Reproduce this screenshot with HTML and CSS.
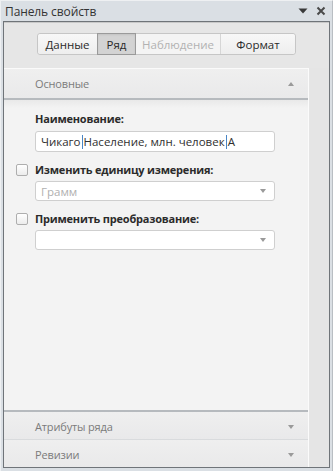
FILE: index.html
```html
<!DOCTYPE html>
<html lang="ru">
<head>
<meta charset="utf-8">
<title>Панель свойств</title>
<link rel="stylesheet" href="styles.css">
</head>
<body>
<div class="window">
  <div class="titlebar">
    <span class="title">Панель свойств</span>
    <span class="title-tools">
      <svg class="tool" width="10" height="8" viewBox="0 0 10 8"><path d="M0.5 1.5 H9.5 L5 6.5 Z" fill="#3a3a3a"/></svg>
      <svg class="tool" width="10" height="10" viewBox="0 0 10 10"><path d="M1.5 1.5 L8.5 8.5 M8.5 1.5 L1.5 8.5" stroke="#4a4a4a" stroke-width="2"/></svg>
    </span>
  </div>
  <div class="inner">
    <div class="tabs-area">
      <div class="tabs">
        <span class="tab">Данные</span>
        <span class="tab active">Ряд</span>
        <span class="tab disabled">Наблюдение</span>
        <span class="tab">Формат</span>
      </div>
    </div>
    <div class="body-row">
      <div class="panel">
        <div class="section-head open">
          <span>Основные</span>
          <span class="arrow up"></span>
        </div>
        <div class="section-body">
          <div class="field">
            <div class="label">Наименование:</div>
            <div class="input">Чикаго<span class="sep"></span>Население, млн. человек<span class="sep"></span>А</div>
          </div>
          <div class="field">
            <div class="label check-label"><span class="checkbox"></span>Изменить единицу измерения:</div>
            <div class="input select"><span class="placeholder">Грамм</span><span class="arrow down"></span></div>
          </div>
          <div class="field">
            <div class="label check-label"><span class="checkbox"></span>Применить преобразование:</div>
            <div class="input select"><span></span><span class="arrow down"></span></div>
          </div>
        </div>
        <div class="section-head closed first">
          <span>Атрибуты ряда</span>
          <span class="arrow down"></span>
        </div>
        <div class="section-head closed">
          <span>Ревизии</span>
          <span class="arrow down"></span>
        </div>
      </div>
      <div class="strip"></div>
    </div>
  </div>
</div>
</body>
</html>
```

FILE: styles.css
```css
* { box-sizing: border-box; }
html, body {
  margin: 0;
  padding: 0;
  width: 333px;
  height: 471px;
  overflow: hidden;
}
body {
  font-family: "Open Sans", "Noto Sans", sans-serif;
  font-size: 11px;
  color: #2e2e2e;
  background: #dadfe4;
}
.window {
  width: 333px;
  height: 471px;
  display: flex;
  flex-direction: column;
  border-left: 1px solid #eef0f2;
  border-top: 1px solid #eef0f2;
  border-right: 1px solid #b9bec3;
}
.titlebar {
  height: 20px;
  display: flex;
  align-items: center;
  justify-content: space-between;
  padding: 0 6px 0 4px;
}
.title {
  font-size: 12px;
  color: #333;
  letter-spacing: -0.1px;
}
.title-tools {
  display: flex;
  align-items: center;
  gap: 8px;
}
.tool { display: block; }
.inner {
  flex: 1;
  margin: 0 2px 3px 2px;
  border: 1px solid #6f7479;
  background: #e6e6e6;
  display: flex;
  flex-direction: column;
  min-height: 0;
}
.tabs-area {
  height: 46px;
  display: flex;
  justify-content: center;
  padding-top: 10px;
  border-top: 1px solid #c8c8c8;
}
.tabs {
  display: flex;
  height: 22px;
  border: 1px solid #c6c6c6;
  border-radius: 3px;
  background: #f4f4f4;
}
.tab {
  display: flex;
  align-items: center;
  justify-content: center;
  font-size: 11.5px;
  color: #2a2a2a;
  background: linear-gradient(#f8f8f8, #eeeeee);
  border-left: 1px solid #d6d6d6;
}
.tab:first-child { border-left: none; width: 59px; border-radius: 3px 0 0 3px; }
.tab:nth-child(2) { width: 39px; }
.tab:nth-child(3) { width: 84px; }
.tab:nth-child(4) { width: 75px; border-radius: 0 3px 3px 0; }
.tab.active {
  background: #d3d3d3;
  border: 1px solid #9a9a9a;
  margin: -1px 0;
  box-shadow: inset 0 1px 2px rgba(0,0,0,0.08);
}
.tab.disabled {
  color: #b2b2b2;
  background: #f4f4f4;
  border-left: none;
}
.body-row {
  flex: 1;
  display: flex;
  min-height: 0;
}
.panel {
  width: 305px;
  display: flex;
  flex-direction: column;
  background: #f3f3f3;
  border-right: 1px solid #fbfbfb;
  border-top: 1px solid #fafafa;
}
.strip {
  flex: 1;
  background: #e5e5e5;
}
.section-head {
  display: flex;
  align-items: center;
  justify-content: space-between;
  padding: 0 14px 0 31px;
  color: #7b7b7b;
  font-size: 11px;
  letter-spacing: -0.15px;
  background: linear-gradient(#efefef, #e9e9ea);
}
.section-head.open {
  height: 31px;
  border-bottom: 2px solid #b6babe;
}
.section-head.closed {
  height: 28px;
  padding-top: 2px;
  border-top: 1px solid #d9dbdd;
}
.section-head.closed.first {
  height: 29px;
  border-top: 2px solid #b6babe;
}
.section-body {
  flex: 1;
  padding: 11px 0 0 12px;
  background: linear-gradient(#e9e9e9 0, #f3f3f3 8px);
}
.field {
  display: flex;
  flex-direction: column;
  margin-bottom: 10px;
}
.label {
  font-weight: 700;
  font-size: 11px;
  letter-spacing: -0.2px;
  color: #2b2b2b;
  padding-left: 19px;
  height: 16px;
  line-height: 16px;
  margin-bottom: 3px;
  display: flex;
  align-items: center;
}
.field:first-child .label { margin-bottom: 4px; }
.check-label { padding-left: 0; }
.checkbox {
  width: 12px;
  height: 12px;
  border: 1px solid #aeaeae;
  border-radius: 2px;
  background: linear-gradient(#ffffff, #ececec);
  margin: 0 7px 0 0;
}
.input {
  margin-left: 19px;
  width: 240px;
  height: 21px;
  border: 1px solid #cfcfcf;
  border-radius: 3px;
  background: #ffffff;
  display: flex;
  align-items: center;
  padding: 0 5px;
  font-size: 11.5px;
  color: #303030;
}
.select {
  height: 20px;
  justify-content: space-between;
  padding-right: 8px;
}
.sep {
  display: inline-block;
  width: 1px;
  height: 14px;
  background: #4a86c5;
  margin: 0 1px;
}
.placeholder { color: #b0b0b0; }
.arrow {
  width: 0;
  height: 0;
  border-left: 3.5px solid transparent;
  border-right: 3.5px solid transparent;
}
.arrow.down { border-top: 4px solid #9a9a9a; }
.arrow.up { border-bottom: 4px solid #9a9a9a; }
```
